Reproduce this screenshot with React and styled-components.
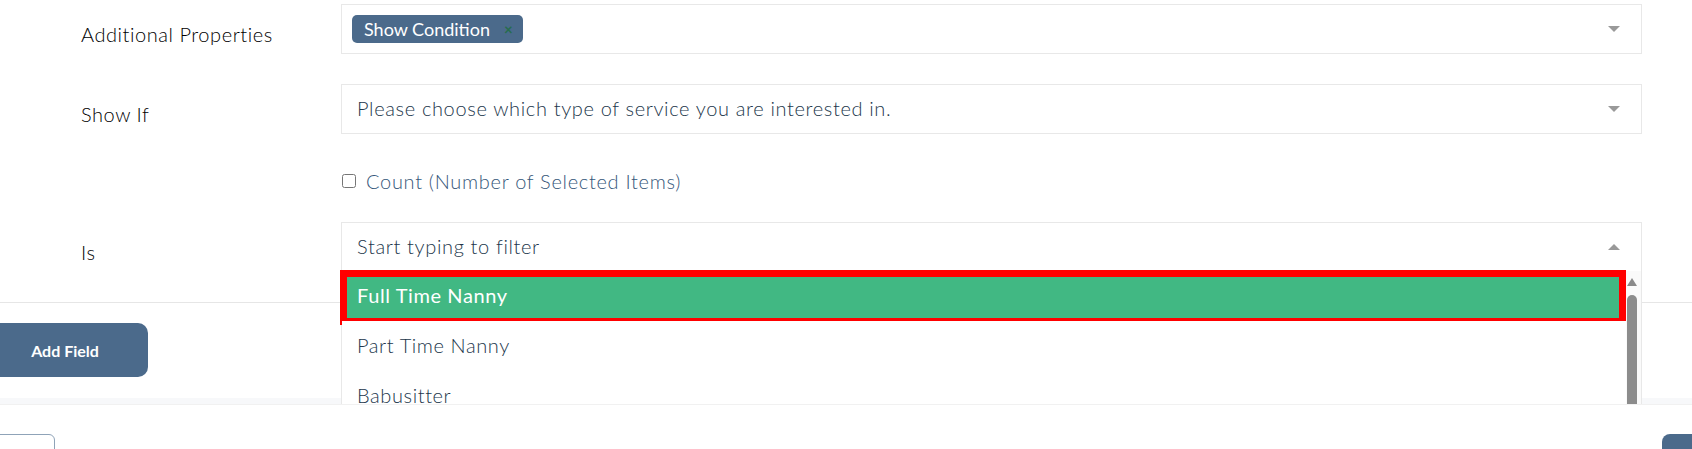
import React from 'react';
import styled, { createGlobalStyle } from 'styled-components';

const Global = createGlobalStyle`
  html, body { margin: 0; padding: 0; background: #fff; }
  body { font-family: Lato, "Noto Sans", sans-serif; overflow: hidden; }
  * { box-sizing: border-box; }
`;

const Page = styled.div`
  width: 1692px;
  height: 449px;
  overflow: hidden;
  background: #fff;
`;

const Body = styled.div`
  height: 404px;
  overflow: hidden;
  position: relative;
  display: flex;
  flex-direction: column;
`;

const Form = styled.div`
  flex: 0 0 303px;
  padding: 4px 50px 0 81px;
  border-bottom: 1px solid #e6e6e6;
  display: flex;
  flex-direction: column;
`;

const Row = styled.div`
  display: grid;
  grid-template-columns: 260px 1fr;
  align-items: center;
  margin-top: ${p => p.$mt || 0}px;
`;

const Label = styled.div`
  font-size: 20px;
  line-height: 24px;
  font-weight: 300;
  letter-spacing: 0.55px;
  padding-top: 9px;
  color: #000;
`;

const FieldWrap = styled.div`
  position: relative;
`;

const Box = styled.div`
  height: 50px;
  border: 1px solid #e8e8e8;
  background: #fff;
  display: flex;
  align-items: center;
  padding: 0 21px 0 ${p => p.$pl || 15}px;
`;

const Value = styled.div`
  flex: 1;
  font-size: 20px;
  line-height: 24px;
  font-weight: 300;
  letter-spacing: 0.65px;
  padding-bottom: 3px;
  color: #22364b;
  white-space: nowrap;
`;

const Tags = styled.div`
  flex: 1;
  display: flex;
  align-items: center;
`;

const Tag = styled.span`
  display: inline-flex;
  align-items: center;
  height: 28px;
  padding: 0 10px 0 12px;
  border-radius: 5px;
  background: #4b6a8b;
  color: #fff;
  font-size: 18px;
  line-height: 28px;
`;

const TagX = styled.span`
  margin-left: 14px;
  font-size: 15px;
  font-weight: 700;
  color: #266d4d;
`;

const Arrow = styled.span`
  width: 0;
  height: 0;
  border-left: 6px solid transparent;
  border-right: 6px solid transparent;
  border-top: 6px solid #999;
  transform: ${p => (p.$up ? 'rotate(180deg)' : 'none')};
`;

const CheckRow = styled.div`
  height: 88px;
  padding: 6px 0 0 260px;
  display: flex;
  align-items: center;
  gap: 10px;
`;

const Check = styled.input`
  width: 14px;
  height: 14px;
  margin: 0 0 0 1px;
`;

const CheckText = styled.span`
  font-size: 20px;
  line-height: 24px;
  font-weight: 300;
  letter-spacing: 0.7px;
  color: #36577a;
`;

const Dropdown = styled.div`
  position: absolute;
  top: calc(100% - 1px);
  left: 0;
  right: 0;
  height: 200px;
  background: #fff;
  border-left: 1px solid #e8e8e8;
  border-right: 1px solid #e8e8e8;
  display: flex;
  z-index: 10;
`;

const Options = styled.div`
  flex: 1;
  display: flex;
  flex-direction: column;
`;

const Option = styled.div`
  position: relative;
  height: 50px;
  flex: 0 0 50px;
  display: flex;
  align-items: center;
  padding: 0 0 2px 15px;
  font-size: 20px;
  font-weight: ${p => (p.$active ? 400 : 300)};
  letter-spacing: 0.6px;
  color: ${p => (p.$active ? '#fff' : '#22364b')};
  background: ${p => (p.$active ? '#41b883' : '#fff')};
  ${p =>
    p.$active &&
    `&::after {
      content: '';
      position: absolute;
      top: -1px;
      bottom: -4px;
      left: -2px;
      right: 0;
      border: 7px solid #ff0000;
    }`}
`;

const ScrollTrack = styled.div`
  flex: 0 0 15px;
  background: #fafafa;
  display: flex;
  flex-direction: column;
  align-items: flex-start;
  padding: 7px 0 0 1px;
`;

const ScrollUp = styled.span`
  width: 0;
  height: 0;
  border-left: 5.5px solid transparent;
  border-right: 5.5px solid transparent;
  border-bottom: 8px solid #8a8a8a;
`;

const Thumb = styled.div`
  margin-top: 9px;
  width: 10px;
  height: 200px;
  border-radius: 5px;
  background: #8c8c8c;
`;

const Actions = styled.div`
  flex: 0 0 95px;
  padding: 20px 0 21px;
`;

const AddButton = styled.button`
  margin-left: -18px;
  width: 166px;
  height: 54px;
  border: none;
  border-radius: 10px;
  background: #4b6a8b;
  color: #fff;
  font-family: Lato, "Noto Sans", sans-serif;
  font-weight: 700;
  font-size: 16px;
`;

const Band = styled.div`
  flex: 0 0 6px;
  background: #f7f8fa;
`;

const Footer = styled.div`
  height: 45px;
  border-top: 1px solid #f1f1f1;
  padding-top: 29px;
  display: flex;
  justify-content: space-between;
`;

const FooterButton = styled.button`
  width: 100px;
  height: 40px;
  border-radius: ${p => (p.$primary ? 8 : 6)}px;
  border: ${p => (p.$primary ? 'none' : '1.5px solid #8fa3b8')};
  background: ${p => (p.$primary ? '#4b6a8b' : '#fff')};
  margin: ${p => (p.$primary ? '0 -70px 0 0' : '0 0 0 -45px')};
`;

const options = ['Full Time Nanny', 'Part Time Nanny', 'Babusitter', 'Other'];

export default function App() {
  return (
    <Page>
      <Global />
      <Body>
        <Form>
          <Row>
            <Label>Additional Properties</Label>
            <FieldWrap>
              <Box $pl={10}>
                <Tags>
                  <Tag>
                    Show Condition<TagX>×</TagX>
                  </Tag>
                </Tags>
                <Arrow />
              </Box>
            </FieldWrap>
          </Row>
          <Row $mt={30}>
            <Label>Show If</Label>
            <FieldWrap>
              <Box>
                <Value>Please choose which type of service you are interested in.</Value>
                <Arrow />
              </Box>
            </FieldWrap>
          </Row>
          <CheckRow>
            <Check type="checkbox" />
            <CheckText>Count (Number of Selected Items)</CheckText>
          </CheckRow>
          <Row>
            <Label>Is</Label>
            <FieldWrap>
              <Box>
                <Value>Start typing to filter</Value>
                <Arrow $up />
              </Box>
              <Dropdown>
                <Options>
                  {options.map((o, i) => (
                    <Option key={o} $active={i === 0}>
                      {o}
                    </Option>
                  ))}
                </Options>
                <ScrollTrack>
                  <ScrollUp />
                  <Thumb />
                </ScrollTrack>
              </Dropdown>
            </FieldWrap>
          </Row>
        </Form>
        <Actions>
          <AddButton>Add Field</AddButton>
        </Actions>
        <Band />
      </Body>
      <Footer>
        <FooterButton />
        <FooterButton $primary />
      </Footer>
    </Page>
  );
}
